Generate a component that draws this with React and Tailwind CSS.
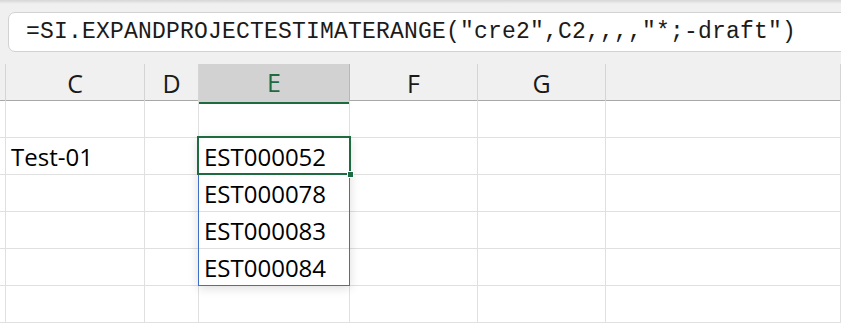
import React from 'react';

const cellFont = { fontFamily: '"Open Sans", "Liberation Sans", sans-serif' };

const columns = ['', 'C', 'D', 'E', 'F', 'G', ''];
const spill = ['EST000052', 'EST000078', 'EST000083', 'EST000084'];

const gridCols = 'grid grid-cols-[6px_139px_54px_151px_128px_128px_1fr]';

const FormulaBar = () => (
  <div className="h-[64px] bg-[#f0f0f0] relative">
    <div className="h-[4px] bg-gradient-to-b from-[#d6d6d6] to-[#f0f0f0]" />
    <div className="ml-2 mt-[8px] -mr-4 h-[40px] rounded-l-[7px] border border-[#d2d2d2] bg-white flex items-center pl-[17px]">
      <span
        className="text-[23px] tracking-[0.2px] text-[#1b1b1b] leading-none whitespace-nowrap"
        style={{ fontFamily: '"Liberation Mono", "DejaVu Sans Mono", monospace' }}
      >
        =SI.EXPANDPROJECTESTIMATERANGE("cre2",C2,,,,"*;-draft")
      </span>
    </div>
  </div>
);

const HeaderRow = () => (
  <div className={`${gridCols} h-[37px] bg-[#f0f0f0] border-b border-[#a8a8a8]`}>
    {columns.map((c, i) => {
      const active = c === 'E';
      return (
        <div
          key={i}
          className={
            active
              ? 'flex items-center justify-center bg-[#d2d2d2] border-r border-[#b8b8b8] border-b-[2px] border-b-[#1e6b41] text-[#1e6b41] text-[25px] -mb-px'
              : 'flex items-center justify-center border-r border-[#d4d4d4] text-[#1a1a1a] text-[25px]'
          }
          style={cellFont}
        >
          {c}
        </div>
      );
    })}
  </div>
);

const Grid = () => {
  const rows = 6;
  const cells = [];
  for (let r = 0; r < rows; r++) {
    for (let c = 0; c < columns.length; c++) {
      let text = '';
      if (r === 1 && c === 1) text = 'Test-01';
      if (c === 3 && r >= 1 && r <= 4) text = spill[r - 1];
      cells.push(
        <div
          key={`${r}-${c}`}
          className="h-[37px] border-r border-b border-[#e0e0e0] flex items-center pl-[5px] pt-[1px] text-[24px] text-black whitespace-nowrap"
          style={{ ...cellFont, gridRow: r + 1, gridColumn: c + 1 }}
        >
          {text}
        </div>
      );
    }
  }

  return (
    <div className={`${gridCols} grid-rows-[repeat(6,37px)] bg-white`}>
      {cells}
      {/* spill range outline */}
      <div className="col-start-4 row-start-2 row-span-4 -ml-px -mt-px border border-[#3f6fc6] shadow-[0_2px_10px_rgba(0,0,0,0.14)] pointer-events-none z-10" />
      {/* active cell */}
      <div className="col-start-4 row-start-2 -ml-[2px] -mt-[2px] -mr-px border-2 border-[#1e6b41] relative z-20 pointer-events-none">
        <div className="absolute -right-[5px] -bottom-[5px] w-[7px] h-[7px] bg-[#1e6b41] border border-white" />
      </div>
    </div>
  );
};

export default function App() {
  return (
    <div className="w-[841px] h-[326px] overflow-hidden bg-white">
      <FormulaBar />
      <HeaderRow />
      <Grid />
    </div>
  );
}
